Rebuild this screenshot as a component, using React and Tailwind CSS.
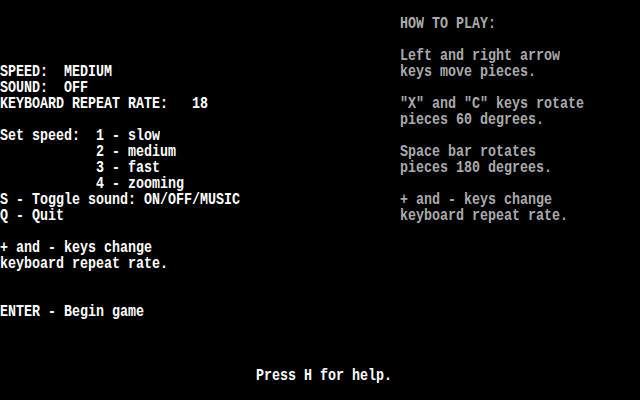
const left = {
  4: 'SPEED:  MEDIUM',
  5: 'SOUND:  OFF',
  6: 'KEYBOARD REPEAT RATE:   18',
  8: 'Set speed:  1 - slow',
  9: '            2 - medium',
  10: '            3 - fast',
  11: '            4 - zooming',
  12: 'S - Toggle sound: ON/OFF/MUSIC',
  13: 'Q - Quit',
  15: '+ and - keys change',
  16: 'keyboard repeat rate.',
  19: 'ENTER - Begin game',
};

const right = {
  1: 'HOW TO PLAY:',
  3: 'Left and right arrow',
  4: 'keys move pieces.',
  6: '"X" and "C" keys rotate',
  7: 'pieces 60 degrees.',
  9: 'Space bar rotates',
  10: 'pieces 180 degrees.',
  12: '+ and - keys change',
  13: 'keyboard repeat rate.',
};

const rows = Array.from({ length: 25 }, (_, i) => i);

export default function App() {
  return (
    <div
      className="w-[640px] h-[400px] bg-black overflow-hidden whitespace-pre text-[13.333px] leading-[16px] font-bold"
      style={{ fontFamily: '"Liberation Mono", "DejaVu Sans Mono", monospace' }}
    >
      {rows.map((r) =>
        r === 23 ? (
          <div key={r} className="h-[16px] pl-[256px] text-white scale-y-[1.18]">
            Press H for help.
          </div>
        ) : (
          <div key={r} className="h-[16px] flex scale-y-[1.18]">
            <span className="w-[400px] shrink-0 text-white">{left[r] || ''}</span>
            <span className="text-[#aaaaaa]">{right[r] || ''}</span>
          </div>
        )
      )}
    </div>
  );
}
